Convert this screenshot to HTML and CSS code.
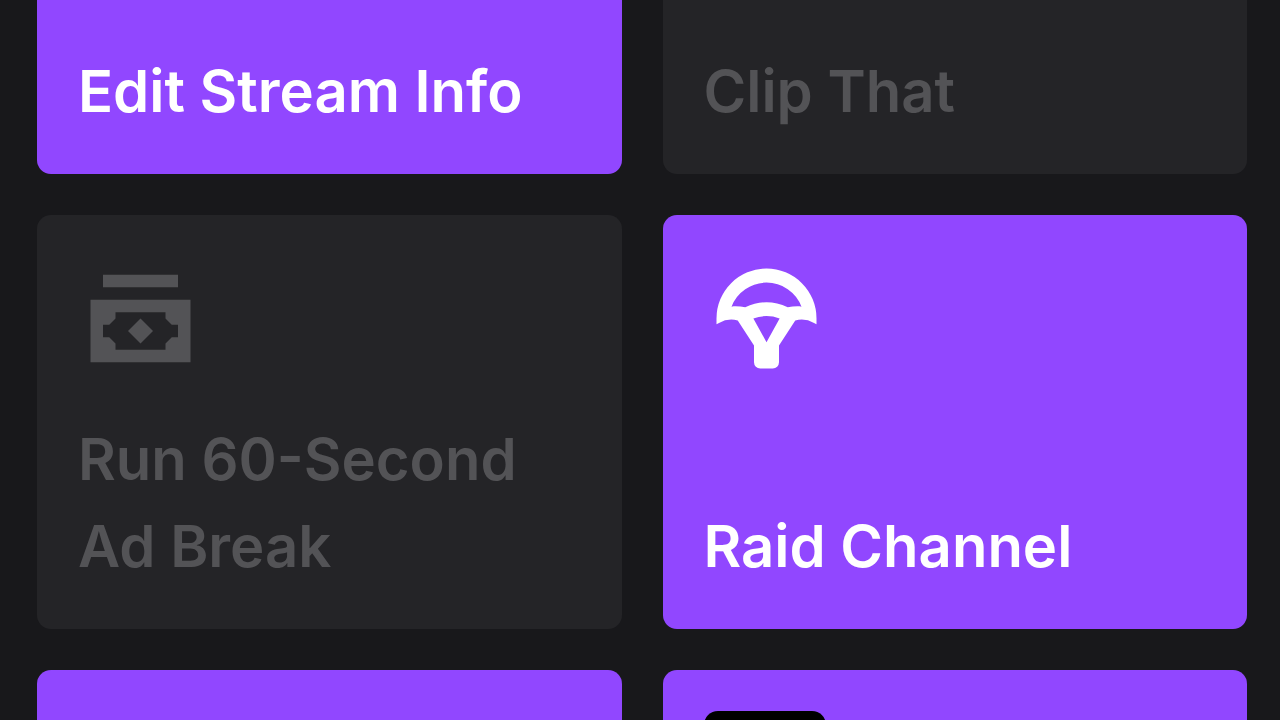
FILE: index.html
```html
<!DOCTYPE html>
<html lang="en">
<head>
    <meta charset="UTF-8">
    <meta name="viewport" content="width=device-width, initial-scale=1.0">
    <title>Quick Actions</title>
    <link rel="stylesheet" href="styles.css">
</head>
<body>
    <!-- Quick actions grid, scrolled part way down -->
    <main class="quick-actions">
        <div class="action-grid">
            <button type="button" class="action">
                <span class="action-label">Edit Stream Info</span>
            </button>
            <button type="button" class="action" disabled>
                <span class="action-label">Clip That</span>
            </button>

            <button type="button" class="action" disabled>
                <svg class="action-icon" viewBox="0 0 20 20" aria-hidden="true">
                    <path d="M4 3h12v2H4z"/>
                    <path fill-rule="evenodd" d="M2 7h16v10H2V7zm4 2v1l-1 1H4v2h1l1 1v1h8v-1l1-1h1v-2h-1l-1-1V9H6z"/>
                    <path d="M10 10l2 2-2 2-2-2z"/>
                </svg>
                <span class="action-label">Run 60-Second Ad Break</span>
            </button>
            <button type="button" class="action">
                <svg class="action-icon" viewBox="0 0 20 20" aria-hidden="true">
                    <path fill-rule="evenodd" d="M18 10v.9l-.4-.2a4 4 0 0 0-3-.4L12 14.300V17a1 1 0 0 1-1 1H9a1 1 0 0 1-1-1v-2.700l-2.600-4a4 4 0 0 0-3 .4L2 10.900V10a8 8 0 1 1 16 0zM15.600 8.100a6 6 0 0 0-11.200 0c.7-.1 1.500 0 2.200.1a8 8 0 0 1 6.800 0c.7-.1 1.500-.2 2.200-.1zM7.900 10l2.100 3.800 2.100-3.800a6 6 0 0 0-4.200 0z"/>
                </svg>
                <span class="action-label">Raid Channel</span>
            </button>

            <button type="button" class="action"></button>
            <button type="button" class="action">
                <span class="app-icon"></span>
            </button>
        </div>
    </main>
</body>
</html>
```

FILE: styles.css
```css
* {
    box-sizing: border-box;
}

body {
    margin: 0;
    background: #18181b;
    font-family: Inter, "Liberation Sans", sans-serif;
}

.quick-actions {
    height: 100vh;
    overflow: hidden;
}

.action-grid {
    display: grid;
    grid-template-columns: 1fr 1fr;
    grid-auto-rows: minmax(414px, auto);
    gap: 41px;
    margin-top: -240px; /* first row is partly scrolled away */
    padding: 0 33px 0 37px;
}

.action {
    display: flex;
    flex-direction: column;
    align-items: flex-start;
    padding: 41px 41px 39px;
    border: none;
    border-radius: 14px;
    background: #9147ff;
    color: #fff;
    font: inherit;
    font-size: 58px;
    font-weight: 600;
    line-height: 87px;
    text-align: left;
    cursor: pointer;
}

.action:hover {
    background: #772ce8;
}

.action:disabled {
    background: #242427;
    color: #535356;
    cursor: default;
}

.action-icon {
    width: 125px;
    height: 125px;
    fill: currentColor;
}

.action-label {
    margin-top: auto;
}

.app-icon {
    width: 122px;
    height: 122px;
    border-radius: 14px;
    background: #000;
}
```
